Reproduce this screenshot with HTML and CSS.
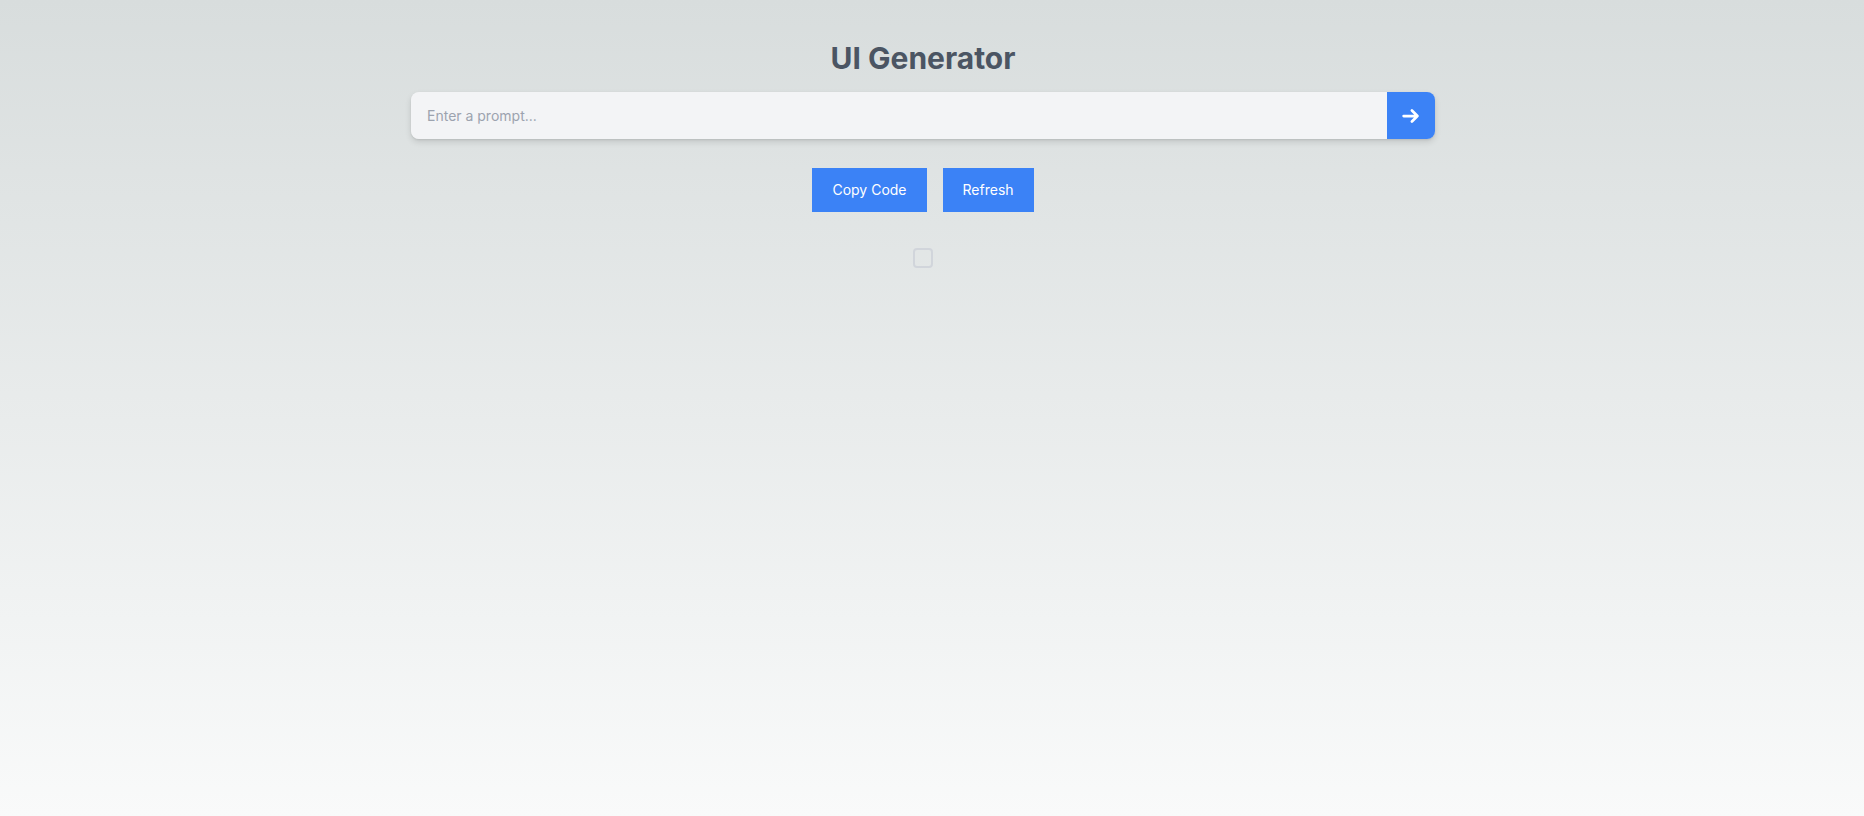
FILE: index.html
```html
<!DOCTYPE html>
<html lang="en">
<head>
<meta charset="utf-8">
<title>UI Generator</title>
<link rel="stylesheet" href="styles.css">
</head>
<body>
<main class="page">
  <h1 class="title">UI Generator</h1>
  <form class="prompt">
    <input class="prompt-input" type="text" placeholder="Enter a prompt..." autofocus>
    <button class="prompt-send" type="button" aria-label="Send">
      <svg width="22" height="22" viewBox="0 0 24 24" fill="none" stroke="#fff" stroke-width="3" stroke-linecap="round" stroke-linejoin="round"><path d="M4 12h15M13 6l6 6-6 6"/></svg>
    </button>
  </form>
  <div class="actions">
    <button class="btn" type="button">Copy Code</button>
    <button class="btn" type="button">Refresh</button>
  </div>
  <div class="preview">
    <span class="check"></span>
  </div>
</main>
</body>
</html>
```
FILE: styles.css
```css
html, body {
  margin: 0;
  height: 100%;
}
body {
  background: linear-gradient(to bottom, #d8dddd 0%, #f9fafa 100%);
  font-family: Inter, "Liberation Sans", sans-serif;
  min-height: 100vh;
}
.page {
  display: flex;
  flex-direction: column;
  align-items: center;
  padding-top: 40px;
  padding-right: 18px;
}
.title {
  margin: 0;
  font-size: 30px;
  line-height: 36px;
  font-weight: 700;
  color: #4b5563;
}
.prompt {
  margin-top: 16px;
  width: 1024px;
  height: 47px;
  display: flex;
  border-radius: 8px;
  box-shadow: 0 3px 6px rgba(0, 0, 0, 0.12), 0 1px 2px rgba(0, 0, 0, 0.08);
}
.prompt-input {
  flex: 1;
  border: none;
  outline: none;
  background: #f3f4f6;
  border-radius: 8px 0 0 8px;
  padding: 0 16px;
  font-family: inherit;
  font-size: 14px;
  color: #1f2937;
  caret-color: #1f2937;
}
.prompt-input::placeholder {
  color: #9ca3af;
}
.prompt-send {
  width: 48px;
  border: none;
  background: #3b82f6;
  border-radius: 0 8px 8px 0;
  display: flex;
  align-items: center;
  justify-content: center;
  padding: 0;
  cursor: pointer;
}
.actions {
  margin-top: 29px;
  display: flex;
  gap: 16px;
}
.btn {
  border: none;
  background: #3b82f6;
  color: #fff;
  font-family: inherit;
  font-size: 14px;
  line-height: 20px;
  padding: 12px 20px;
  cursor: pointer;
}
.preview {
  margin-top: 36px;
}
.check {
  display: block;
  width: 16px;
  height: 16px;
  border: 2px solid #d1d5db;
  border-radius: 4px;
}
```
